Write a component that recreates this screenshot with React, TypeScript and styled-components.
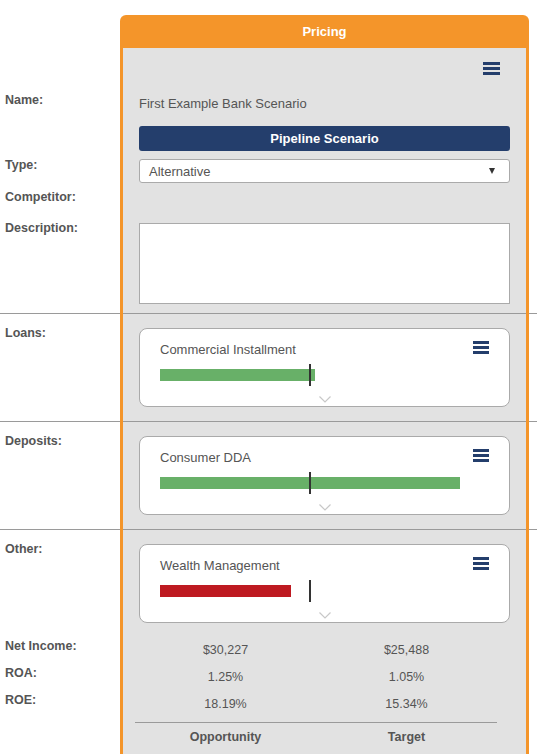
import React from 'react';
import styled, { createGlobalStyle } from 'styled-components';

const ORANGE = '#f4952a';
const NAVY = '#243e6c';
const PANEL_BG = '#e2e2e2';
const RULE = '#9a9a9a';

const GlobalStyle = createGlobalStyle`
  html, body { margin: 0; padding: 0; background: #fff; overflow: hidden; }
  body { font-family: "Liberation Sans", Arial, sans-serif; color: #555; }
  * { box-sizing: border-box; }
`;

const Page = styled.div`
  display: flex;
  flex-direction: column;
  height: 754px;
  padding-top: 15px;
`;

const Row = styled.div<{ $grow?: boolean }>`
  display: grid;
  grid-template-columns: 120px 409px 1fr;
  ${(p) => (p.$grow ? 'flex: 1;' : '')}
`;

const LabelCell = styled.div<{ $pt: number }>`
  display: flex;
  flex-direction: column;
  padding: ${(p) => p.$pt}px 0 0 5px;
`;

const Label = styled.div<{ $mt?: number; $lh?: number }>`
  font-size: 12.5px;
  font-weight: bold;
  line-height: ${(p) => p.$lh ?? 14}px;
  color: #555;
  margin-top: ${(p) => p.$mt ?? 0}px;
`;

const PanelCell = styled.div<{ $pad: string }>`
  display: flex;
  flex-direction: column;
  background: ${PANEL_BG};
  border-left: 3px solid ${ORANGE};
  border-right: 3px solid ${ORANGE};
  padding: ${(p) => p.$pad};
`;

const PanelHeader = styled.div`
  height: 33px;
  background: ${ORANGE};
  border-radius: 6px 6px 0 0;
  color: #fff;
  font-weight: bold;
  font-size: 13px;
  display: flex;
  align-items: center;
  justify-content: center;
`;

const DividerRow = styled(Row)`
  height: 1px;
`;

const DividerSide = styled.div`
  background: ${RULE};
`;

const DividerMid = styled.div`
  background: ${RULE};
  border-left: 3px solid ${ORANGE};
  border-right: 3px solid ${ORANGE};
`;

const MenuRow = styled.div`
  display: flex;
  justify-content: flex-end;
  padding-right: 10px;
  height: 13px;
`;

const NameText = styled.div`
  margin-top: 22px;
  font-size: 13px;
  line-height: 14px;
  color: #555;
`;

const PipelineBar = styled.div`
  margin-top: 15px;
  height: 25px;
  border-radius: 3px;
  background: ${NAVY};
  color: #fff;
  font-weight: bold;
  font-size: 13px;
  display: flex;
  align-items: center;
  justify-content: center;
`;

const SelectBox = styled.div`
  margin-top: 8px;
  height: 24px;
  border: 1px solid #aaa;
  border-radius: 3px;
  background: #fff;
  display: flex;
  align-items: center;
  justify-content: space-between;
  padding: 0 14px 0 9px;
  font-size: 13px;
  color: #555;
`;

const Caret = styled.span`
  width: 0;
  height: 0;
  border-left: 3px solid transparent;
  border-right: 3px solid transparent;
  border-top: 6px solid #333;
`;

const TextArea = styled.div`
  margin-top: 40px;
  height: 81px;
  border: 1px solid #aaa;
  background: #fff;
`;

const Card = styled.div`
  height: 79px;
  background: #fff;
  border: 1px solid #aaa;
  border-radius: 8px;
  padding: 12px 20px 0;
  display: flex;
  flex-direction: column;
`;

const CardHead = styled.div`
  display: flex;
  justify-content: space-between;
  align-items: flex-start;
`;

const CardTitle = styled.div`
  margin-top: 2px;
  font-size: 13px;
  line-height: 14px;
  color: #555;
`;

const Track = styled.div`
  position: relative;
  height: 22px;
  margin-top: 7px;
`;

const Bar = styled.div<{ $color: string }>`
  margin-top: 5px;
  height: 12px;
  background: ${(p) => p.$color};
`;

const Marker = styled.div`
  position: absolute;
  left: 149px;
  top: 0;
  width: 2px;
  height: 22px;
  background: #333;
`;

const Chevron = styled.svg`
  align-self: center;
  margin-top: 10px;
`;

const StatsGrid = styled.div`
  display: grid;
  grid-template-columns: 1fr 1fr;
  margin: 0 13px 0 -4px;
`;

const StatValue = styled.div`
  text-align: center;
  font-size: 12.5px;
  line-height: 27px;
  color: #555;
`;

const StatsRule = styled.div`
  grid-column: 1 / -1;
  height: 1px;
  background: ${RULE};
  margin-top: 4px;
`;

const StatHead = styled.div`
  text-align: center;
  font-size: 12.5px;
  font-weight: bold;
  line-height: 14px;
  padding-top: 7px;
  color: #555;
`;

const Hamburger: React.FC<{ w?: number }> = ({ w = 17 }) => (
  <svg width={w} height={13} viewBox={`0 0 ${w} 13`}>
    <rect x="0" y="0" width={w} height="3" fill={NAVY} />
    <rect x="0" y="5" width={w} height="3" fill={NAVY} />
    <rect x="0" y="10" width={w} height="3" fill={NAVY} />
  </svg>
);

type Product = { title: string; width: number; color: string };

const ProductCard: React.FC<{ p: Product }> = ({ p }) => (
  <Card>
    <CardHead>
      <CardTitle>{p.title}</CardTitle>
      <Hamburger w={16} />
    </CardHead>
    <Track>
      <Bar $color={p.color} style={{ width: p.width }} />
      <Marker />
    </Track>
    <Chevron width="12" height="7" viewBox="0 0 12 7">
      <polyline points="0.5,0.5 6,6 11.5,0.5" fill="none" stroke="#c8c8c8" strokeWidth="1.2" />
    </Chevron>
  </Card>
);

const Divider = () => (
  <DividerRow>
    <DividerSide />
    <DividerMid />
    <DividerSide />
  </DividerRow>
);

const sections: { label: string; product: Product; divider: boolean }[] = [
  { label: 'Loans:', product: { title: 'Commercial Installment', width: 155, color: '#68b068' }, divider: true },
  { label: 'Deposits:', product: { title: 'Consumer DDA', width: 300, color: '#68b068' }, divider: true },
  { label: 'Other:', product: { title: 'Wealth Management', width: 131, color: '#be1a21' }, divider: false },
];

const stats = [
  ['Net Income:', '$30,227', '$25,488'],
  ['ROA:', '1.25%', '1.05%'],
  ['ROE:', '18.19%', '15.34%'],
];

export default function App() {
  return (
    <>
      <GlobalStyle />
      <Page>
        <Row>
          <div />
          <PanelHeader>Pricing</PanelHeader>
          <div />
        </Row>
        <Row>
          <LabelCell $pt={45}>
            <Label>Name:</Label>
            <Label $mt={51}>Type:</Label>
            <Label $mt={18}>Competitor:</Label>
            <Label $mt={17}>Description:</Label>
          </LabelCell>
          <PanelCell $pad="14px 16px 9px">
            <MenuRow>
              <Hamburger />
            </MenuRow>
            <NameText>First Example Bank Scenario</NameText>
            <PipelineBar>Pipeline Scenario</PipelineBar>
            <SelectBox>
              <span>Alternative</span>
              <Caret />
            </SelectBox>
            <TextArea />
          </PanelCell>
          <div />
        </Row>
        {sections.map((s) => (
          <React.Fragment key={s.label}>
            <Divider />
            <Row>
              <LabelCell $pt={12}>
                <Label>{s.label}</Label>
              </LabelCell>
              <PanelCell $pad={s.divider ? '14px 16px 14px' : '14px 16px 0'}>
                <ProductCard p={s.product} />
              </PanelCell>
              <div />
            </Row>
          </React.Fragment>
        ))}
        <Row $grow>
          <LabelCell $pt={10}>
            {stats.map((r) => (
              <Label key={r[0]} $lh={27}>
                {r[0]}
              </Label>
            ))}
          </LabelCell>
          <PanelCell $pad="14px 16px 0">
            <StatsGrid>
              {stats.map((r) => (
                <React.Fragment key={r[0]}>
                  <StatValue>{r[1]}</StatValue>
                  <StatValue>{r[2]}</StatValue>
                </React.Fragment>
              ))}
              <StatsRule />
              <StatHead>Opportunity</StatHead>
              <StatHead>Target</StatHead>
            </StatsGrid>
          </PanelCell>
          <div />
        </Row>
      </Page>
    </>
  );
}
